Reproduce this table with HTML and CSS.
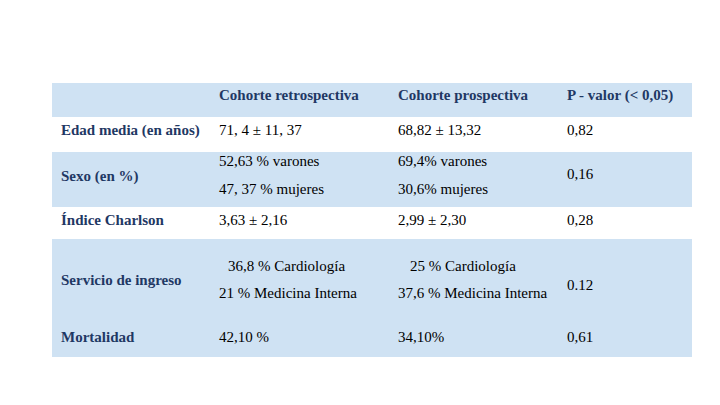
FILE: index.html
```html
<!DOCTYPE html>
<html lang="es">
<head>
<meta charset="utf-8">
<link rel="stylesheet" href="styles.css">
</head>
<body>
<div class="table">
  <div class="row head band">
    <div class="cell"></div>
    <div class="cell th">Cohorte retrospectiva</div>
    <div class="cell th">Cohorte prospectiva</div>
    <div class="cell th">P - valor (&lt; 0,05)</div>
  </div>
  <div class="row edad">
    <div class="cell th">Edad media (en años)</div>
    <div class="cell">71, 4 ± 11, 37</div>
    <div class="cell">68,82 ± 13,32</div>
    <div class="cell">0,82</div>
  </div>
  <div class="row sexo band">
    <div class="cell th lbl">Sexo (en %)</div>
    <div class="cell multi"><span>52,63 % varones</span><span>47, 37 % mujeres</span></div>
    <div class="cell multi"><span>69,4% varones</span><span>30,6% mujeres</span></div>
    <div class="cell pv">0,16</div>
  </div>
  <div class="row indice">
    <div class="cell th">Índice Charlson</div>
    <div class="cell">3,63 ± 2,16</div>
    <div class="cell">2,99 ± 2,30</div>
    <div class="cell">0,28</div>
  </div>
  <div class="row servicio band">
    <div class="cell th lbl">Servicio de ingreso</div>
    <div class="cell multi"><span class="ind1">36,8 % Cardiología</span><span>21 % Medicina Interna</span></div>
    <div class="cell multi"><span class="ind2">25 % Cardiología</span><span>37,6 % Medicina Interna</span></div>
    <div class="cell pv">0.12</div>
  </div>
  <div class="row mort band">
    <div class="cell th">Mortalidad</div>
    <div class="cell">42,10 %</div>
    <div class="cell">34,10%</div>
    <div class="cell">0,61</div>
  </div>
</div>
</body>
</html>
```

FILE: styles.css
```css
html, body {
  margin: 0;
  padding: 0;
  background: #ffffff;
}
body {
  width: 720px;
  height: 405px;
  overflow: hidden;
  font-family: "Liberation Serif", "Times New Roman", serif;
  font-size: 15px;
  color: #000000;
}
.table {
  margin: 83px 0 0 52px;
  width: 640px;
  display: flex;
  flex-direction: column;
}
.row {
  display: grid;
  grid-template-columns: 158px 179px 169px 134px;
  align-items: start;
}
.band {
  background: #cfe2f3;
}
.cell {
  padding-left: 9px;
  line-height: 20px;
  white-space: nowrap;
}
.th {
  font-weight: bold;
  color: #1f3864;
}
.multi {
  display: flex;
  flex-direction: column;
}
.head { height: 34px; }
.head .cell { padding-top: 2px; }
.edad { height: 35px; }
.edad .cell { padding-top: 3px; }
.sexo { height: 55px; }
.sexo .multi { gap: 8px; margin-top: -1px; }
.sexo .lbl { padding-top: 14px; }
.sexo .pv { padding-top: 12px; }
.indice { height: 32px; }
.indice .cell { padding-top: 3px; }
.servicio { height: 78px; }
.servicio .multi { gap: 7px; padding-top: 17px; }
.servicio .lbl { padding-top: 31px; }
.servicio .pv { padding-top: 36px; }
.ind1 { padding-left: 9px; }
.ind2 { padding-left: 12px; }
.mort { height: 40px; }
.mort .cell { padding-top: 10px; }
```
